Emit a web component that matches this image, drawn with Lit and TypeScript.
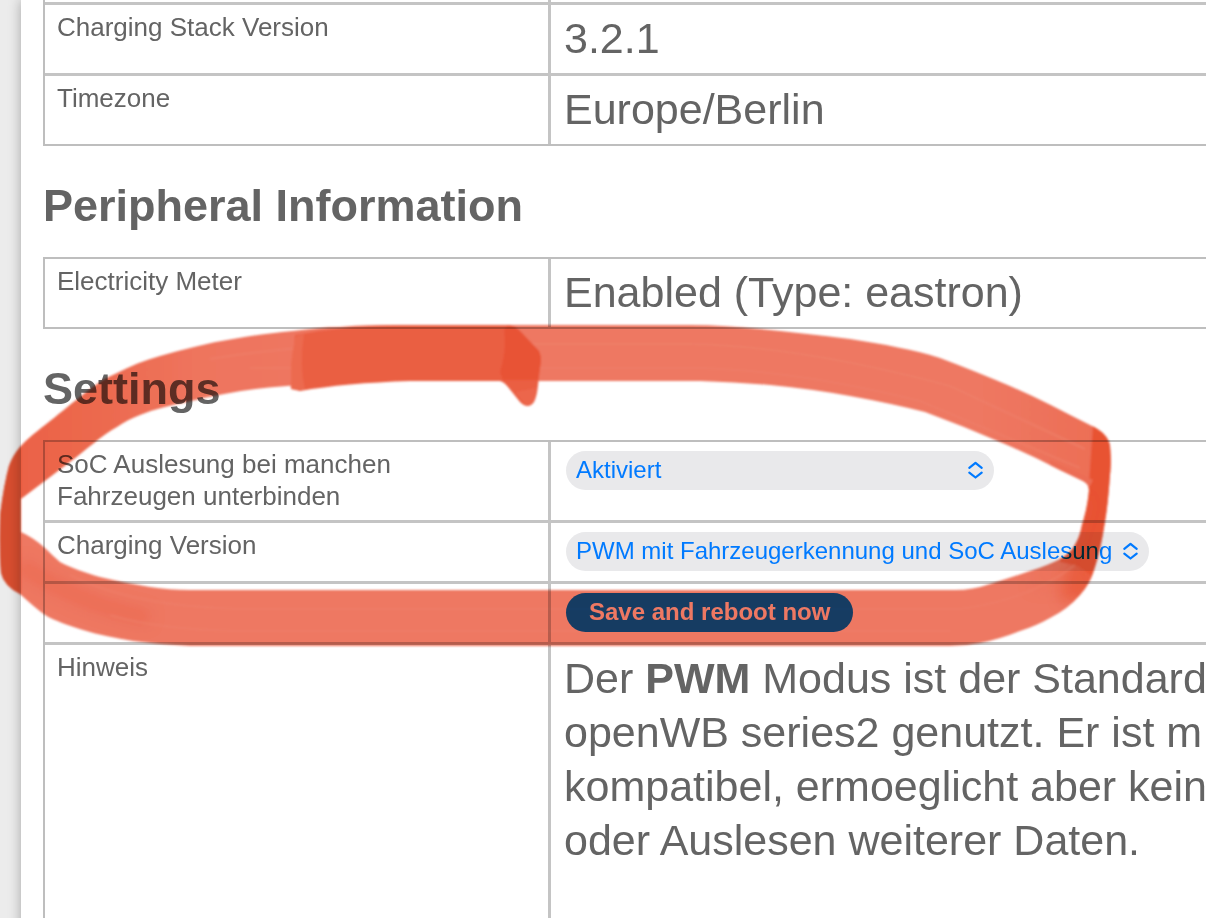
import { LitElement, html, css, svg } from "lit";
import { customElement } from "lit/decorators.js";

const chevrons = svg`
  <path d="M2.3 7.8 8.5 2.9 14.7 7.8M2.3 12.6 8.5 17.5 14.7 12.6" fill="none" stroke="#007aff" stroke-width="2.2" stroke-linecap="round" stroke-linejoin="round"/>`;

@customElement("marker-stroke")
export class MarkerStroke extends LitElement {
  static styles = css`
    :host {
      position: absolute;
      top: 0;
      left: 0;
      pointer-events: none;
      mix-blend-mode: multiply;
    }
    .ink {
      display: block;
    }
  `;

  render() {
    return html`<svg class="ink" width="1206" height="918" viewBox="0 0 1206 918" aria-hidden="true">
      <defs>
        <filter id="soft" x="-2%" y="-2%" width="104%" height="104%">
          <feGaussianBlur stdDeviation="0.9" />
        </filter>
        <filter id="softer" x="-50%" y="-50%" width="200%" height="200%">
          <feGaussianBlur stdDeviation="7" />
        </filter>
        <linearGradient id="tone" gradientUnits="userSpaceOnUse" x1="20" y1="0" x2="1110" y2="0">
          <stop offset="0" stop-color="#eb6247" />
          <stop offset="0.07" stop-color="#ec694e" />
          <stop offset="0.16" stop-color="#ee745d" />
          <stop offset="0.3" stop-color="#ee7862" />
          <stop offset="0.88" stop-color="#ee7862" />
          <stop offset="1" stop-color="#ec6d54" />
        </linearGradient>
        <clipPath id="band">
          <path
            clip-rule="evenodd"
            d="M20 447C28 438 36 432 45 425C58 415 68 406 80 397C92 387 103 379 115 374C130 366 145 360 160 356C184 349 208 343 233 339C253 335 273 333 293 331C310 329 325 327 340 327C360 325 380 325 400 325L690 325C715 325 738 327 760 329C790 332 820 335 850 339C883 344 915 350 940 358C965 367 988 377 1010 386C1038 398 1064 412 1090 425Q1108 433 1110 446C1111 458 1111 465 1110 475C1109 488 1108 502 1106 515C1103 535 1100 552 1094 570Q1090 584 1080 595Q1068 609 1050 618Q1036 626 1020 631Q1000 639 980 643Q965 646 950 646L190 646C170 645 150 643 133 641C116 638 99 635 83 630C68 625 55 621 45 615Q34 607 20 594Q4 586 1 573Q-2 545 0 515Q4 484 9 466Q13 455 20 447Z
               M21 499C38 486 54 474 70 462C86 450 101 436 117 427C124 422 132 418 140 415C155 409 171 405 187 402C220 394 253 388 287 386C325 382 363 381 400 381L700 381Q735 382 770 385Q812 389 850 396Q889 403 925 412Q963 426 1000 442Q1031 455 1060 470L1083 481Q1089 484 1089 490C1088 502 1086 512 1082 525Q1080 536 1076 543Q1072 552 1062 558Q1047 566 1030 571Q1010 578 990 584Q973 590 955 590L190 590C176 590 163 589 150 587C133 584 116 581 100 577C86 573 71 568 60 562Q53 556 45 548Q34 538 21 532Z"
          />
        </clipPath>
      </defs>
      <g filter="url(#soft)">
        <g clip-path="url(#band)">
          <rect x="-4" y="315" width="1120" height="190" fill="url(#tone)" />
          <rect x="-4" y="505" width="1120" height="150" fill="#ee7862" />
          <path d="M20 565Q80 605 150 618" fill="none" stroke="#ea6249" stroke-width="16" opacity=".5" filter="url(#softer)" />
          <path d="M0 440H21V600H0Z" fill="#e85233" />
          <path d="M1098 500 1088 540 1066 568 1060 600 1100 600V520Z" fill="#e85233" opacity=".7" filter="url(#softer)" />
          <path d="M1093 425 1089 484H1060V562L1078 566 1092 576 1120 500V425Z" fill="#e85233" />
          <path d="M1040 500H1089L1082 525 1074 548 1060 562 1080 590 1030 590Z" fill="#ec6a50" opacity=".3" filter="url(#softer)" />
          <path d="M1050 460 1093 480 1090 486 1086 488 1050 470Z" fill="#ec6d54" />
          <path d="M210 359Q300 344 400 344H690Q800 346 950 386L1085 449" fill="none" stroke="#ef826c" stroke-width="2" opacity=".6" />
          <path d="M250 368H700Q800 371 920 401L1080 468" fill="none" stroke="#ef826c" stroke-width="2" opacity=".5" />
          <path d="M70 575Q130 606 240 609H960Q1030 600 1075 565" fill="none" stroke="#ef826c" stroke-width="2" opacity=".5" />
          <path d="M110 615Q160 630 240 631H950" fill="none" stroke="#ef826c" stroke-width="2" opacity=".5" />
        </g>
        <path d="M295 335Q340 326 400 325H508Q516 326 521 332L539 351Q541 355 541 361L538 385Q537 396 534 402Q528 410 520 402L508 387Q504 382 500 381H410Q345 383 300 391L291 389Q290 385 293 362Z" fill="#ea5e42" />
        <path d="M508 325Q516 326 521 332L539 351Q541 355 541 361L538 380H503L500 372Q507 350 504 330Z" fill="#e85335" />
        <path d="M291 364Q293 345 296 336L304 334Q299 365 305 390L291 389Z" fill="#ec6a50" />
        <path d="M515 392 526 405Q531 407 534 401L536 388Z" fill="#ec6a50" opacity=".7" />
      </g>
    </svg>`;
  }
}

@customElement("app-root")
export class AppRoot extends LitElement {
  static styles = css`
    :host {
      display: block;
      position: relative;
      height: 100vh;
      overflow: hidden;
      background: #ececec;
      color: #646464;
      font-family: "Liberation Sans", Arial, Helvetica, sans-serif;
    }
    .card {
      box-sizing: border-box;
      min-height: 100%;
      margin-left: 21px;
      padding-left: 22px;
      background: #fff;
      box-shadow: 0 0 12px rgba(0, 0, 0, 0.3);
    }
    .title {
      margin: 33px 0 24px;
      font-size: 45px;
      line-height: 54px;
      font-weight: 700;
    }
    .grid {
      width: calc(100% + 8px);
      table-layout: fixed;
      border: 2px solid #bebebe;
      border-collapse: separate;
      border-spacing: 0;
    }
    .grid.continued {
      border-top: 0;
    }
    .name-col {
      width: 506px;
    }
    .name,
    .value {
      padding: 6px 12px 8px;
      border-bottom: 3px solid #c4c4c4;
      text-align: left;
      vertical-align: top;
      font-weight: 400;
    }
    .name {
      border-right: 3px solid #c4c4c4;
      font-size: 26px;
      line-height: 32px;
    }
    .value {
      padding-left: 13px;
      font-size: 43px;
      line-height: 54px;
      white-space: nowrap;
    }
    .grid tr:last-child > .name,
    .grid tr:last-child > .value {
      border-bottom: 0;
    }
    .edge > .name,
    .edge > .value {
      height: 2px;
      padding: 0;
    }
    .text {
      display: block;
      max-width: 400px;
    }
    .value.note {
      padding-bottom: 108px;
    }
    .control {
      display: flex;
      margin: 3px 2px 2px;
    }
    .picker {
      position: relative;
      display: flex;
    }
    .picker.fixed {
      width: 428px;
    }
    .select,
    .button {
      height: 39px;
      margin: 0;
      border: 0;
      border-radius: 20px;
      font-family: inherit;
      font-size: 24px;
      line-height: 28px;
    }
    .select {
      flex: 1;
      appearance: none;
      padding: 0 35px 2px 10px;
      background: #e9e9eb;
      color: #007aff;
    }
    .chevrons {
      position: absolute;
      top: 9px;
      right: 10px;
      width: 17px;
      height: 20px;
      pointer-events: none;
    }
    .button {
      padding: 0 23px 2px;
      background: #177eff;
      color: #fff;
      font-weight: 700;
    }
  `;

  private row(name: string, value: unknown) {
    return html`<tr>
      <th class="name" scope="row">${name}</th>
      <td class="value">${value}</td>
    </tr>`;
  }

  private picker(id: string, option: string, fixed = false) {
    return html`<div class="control">
      <div class="picker ${fixed ? "fixed" : ""}">
        <select class="select" id=${id}>
          <option selected>${option}</option>
        </select>
        <svg class="chevrons" viewBox="0 0 17 20" aria-hidden="true">${chevrons}</svg>
      </div>
    </div>`;
  }

  render() {
    const cols = html`<colgroup><col class="name-col" /><col /></colgroup>`;
    return html`
      <main class="card">
        <table class="grid continued">
          ${cols}
          <tbody>
            <tr class="edge"><td class="name"></td><td class="value"></td></tr>
            ${this.row("Charging Stack Version", "3.2.1")}
            ${this.row("Timezone", "Europe/Berlin")}
          </tbody>
        </table>
        <h2 class="title">Peripheral Information</h2>
        <table class="grid">
          ${cols}
          <tbody>
            ${this.row("Electricity Meter", "Enabled (Type: eastron)")}
          </tbody>
        </table>
        <h2 class="title">Settings</h2>
        <table class="grid">
          ${cols}
          <tbody>
            <tr>
              <th class="name" scope="row">
                <label class="text" for="soc">SoC Auslesung bei manchen Fahrzeugen unterbinden</label>
              </th>
              <td class="value">${this.picker("soc", "Aktiviert", true)}</td>
            </tr>
            <tr>
              <th class="name" scope="row"><label class="text" for="version">Charging Version</label></th>
              <td class="value">${this.picker("version", "PWM mit Fahrzeugerkennung und SoC Auslesung")}</td>
            </tr>
            <tr>
              <td class="name"></td>
              <td class="value">
                <div class="control"><button class="button" type="button">Save and reboot now</button></div>
              </td>
            </tr>
            <tr>
              <th class="name" scope="row">Hinweis</th>
              <td class="value note">
                Der <b>PWM</b> Modus ist der Standard<br />openWB series2 genutzt. Er ist m<br />kompatibel, ermoeglicht
                aber kein<br />oder Auslesen weiterer Daten.
              </td>
            </tr>
          </tbody>
        </table>
      </main>
      <marker-stroke></marker-stroke>
    `;
  }
}
